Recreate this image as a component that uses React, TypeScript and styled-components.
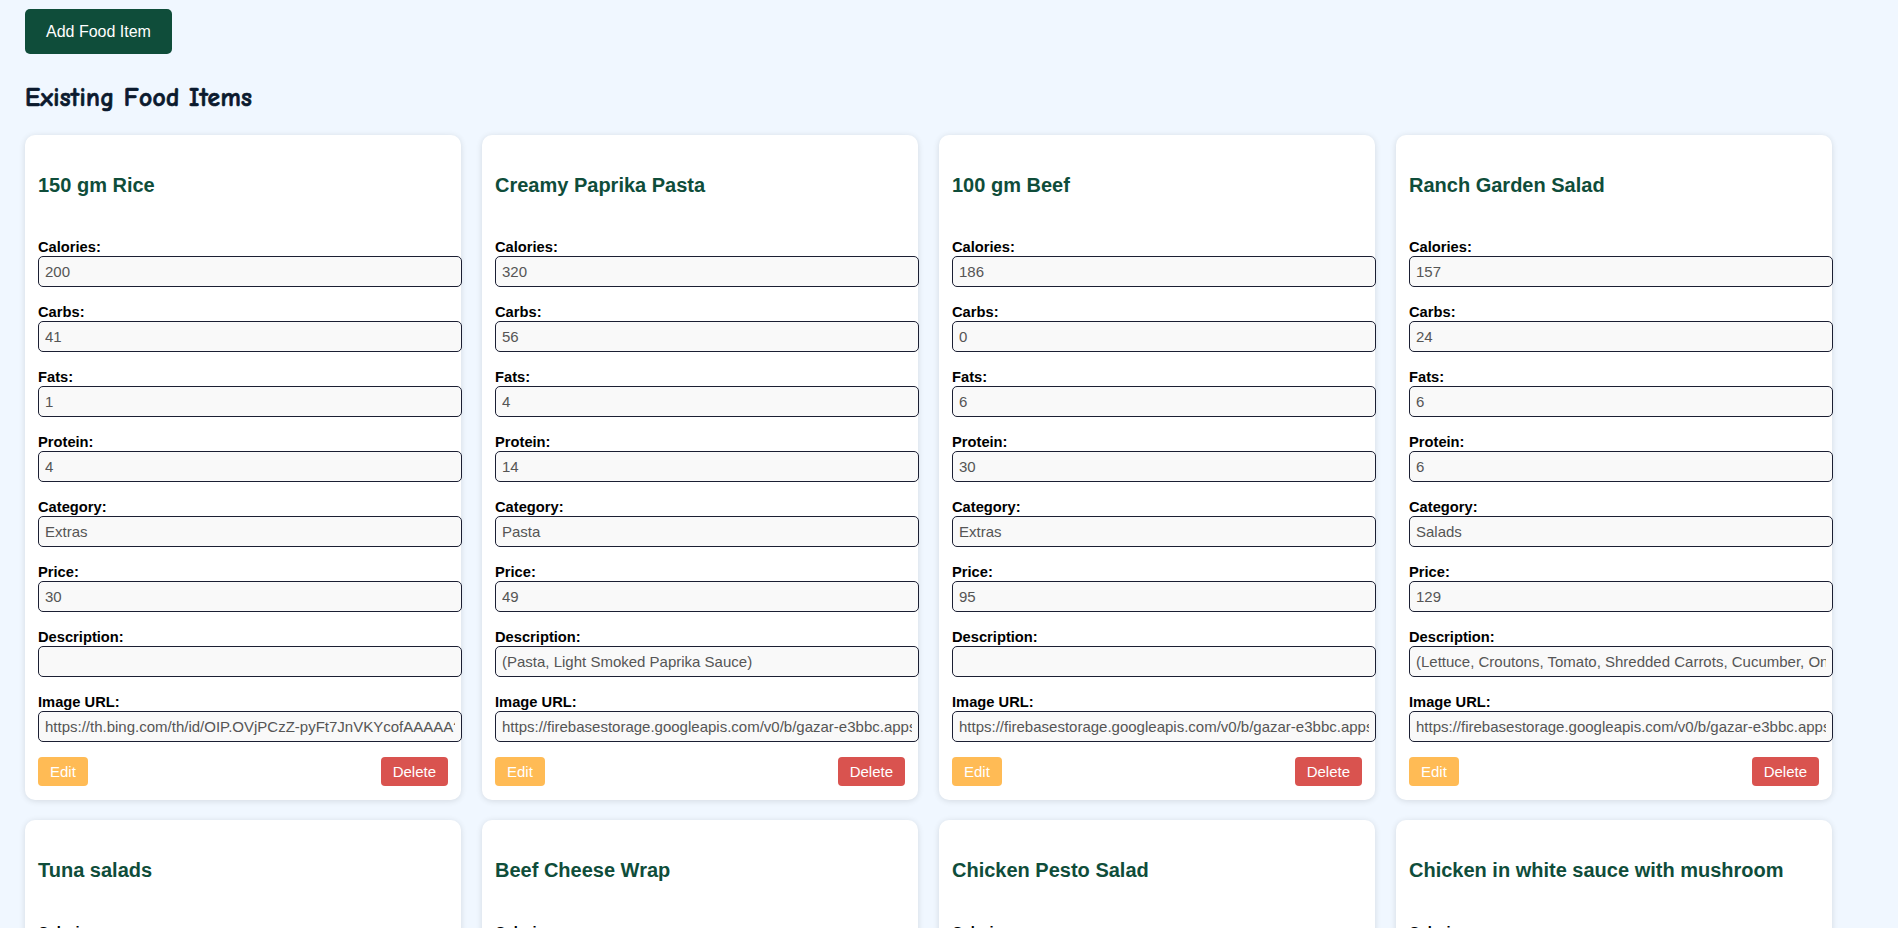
import React from "react";
import styled, { createGlobalStyle } from "styled-components";

const GlobalStyle = createGlobalStyle`
  html, body {
    margin: 0;
    padding: 0;
    background: #f0f7ff;
    font-family: "Liberation Sans", Arial, sans-serif;
  }
  * { box-sizing: content-box; }
`;

const Page = styled.main`
  padding: 9px 25px 40px;
  background: #f0f7ff;
  min-height: 100vh;
  box-sizing: border-box;
`;

const AddButton = styled.button`
  display: block;
  background: #0f4d3a;
  color: #ffffff;
  border: none;
  border-radius: 5px;
  font-family: "Liberation Sans", Arial, sans-serif;
  font-size: 16px;
  line-height: 18px;
  padding: 13.5px 21px;
  cursor: pointer;
`;

const Heading = styled.h2`
  font-family: "Comic Sans MS", "Comic Neue", cursive;
  font-size: 25.5px;
  font-weight: 700;
  line-height: 28px;
  color: #0b1a2e;
  -webkit-text-stroke: 0.7px #0b1a2e;
  letter-spacing: 0.3px;
  margin: 30px 0 23px;
`;

const Grid = styled.div`
  display: grid;
  grid-template-columns: repeat(4, 436px);
  column-gap: 21px;
  row-gap: 20px;
`;

const Card = styled.div`
  background: #ffffff;
  border-radius: 10px;
  box-shadow: 0 1px 6px rgba(0, 0, 0, 0.12);
  padding: 13px 13px 14px;
  width: 410px;
`;

const Title = styled.h3`
  font-family: "Liberation Sans", Arial, sans-serif;
  font-size: 20px;
  font-weight: 700;
  line-height: 23px;
  color: #0f4d3a;
  margin: 26px 0 42px;
`;

const Field = styled.div`
  margin-bottom: 17px;
  &:nth-last-child(2) {
    margin-bottom: 15px;
  }
`;

const Label = styled.label`
  display: block;
  font-size: 14.7px;
  font-weight: 700;
  line-height: 17px;
  color: #000000;
`;

const Input = styled.input`
  display: block;
  width: 100%;
  border: 1px solid #1b1f33;
  border-radius: 5px;
  background: #f9f9f9;
  padding: 6px;
  font-family: "Liberation Sans", Arial, sans-serif;
  font-size: 15px;
  line-height: 17px;
  color: #555555;
  outline: none;
`;

const Actions = styled.div`
  display: flex;
  justify-content: space-between;
  align-items: center;
`;

const ActionButton = styled.button<{ $tone: "edit" | "delete" }>`
  background: ${(p) => (p.$tone === "edit" ? "#ffbb55" : "#d9534f")};
  color: #ffffff;
  border: none;
  border-radius: 4px;
  font-family: "Liberation Sans", Arial, sans-serif;
  font-size: 15px;
  line-height: 17px;
  padding: 6px 12px;
  cursor: pointer;
`;

type Food = {
  name: string;
  calories: string;
  carbs: string;
  fats: string;
  protein: string;
  category: string;
  price: string;
  description: string;
  image: string;
};

const fb =
  "https://firebasestorage.googleapis.com/v0/b/gazar-e3bbc.appspot.com/o/images%2Ffood.jpg?alt=media";

const foods: Food[] = [
  {
    name: "150 gm Rice",
    calories: "200",
    carbs: "41",
    fats: "1",
    protein: "4",
    category: "Extras",
    price: "30",
    description: "",
    image: "https://th.bing.com/th/id/OIP.OVjPCzZ-pyFt7JnVKYcofAAAAA?rs=1&pid=ImgDetMain",
  },
  {
    name: "Creamy Paprika Pasta",
    calories: "320",
    carbs: "56",
    fats: "4",
    protein: "14",
    category: "Pasta",
    price: "49",
    description: "(Pasta, Light Smoked Paprika Sauce)",
    image: fb,
  },
  {
    name: "100 gm Beef",
    calories: "186",
    carbs: "0",
    fats: "6",
    protein: "30",
    category: "Extras",
    price: "95",
    description: "",
    image: fb,
  },
  {
    name: "Ranch Garden Salad",
    calories: "157",
    carbs: "24",
    fats: "6",
    protein: "6",
    category: "Salads",
    price: "129",
    description: "(Lettuce, Croutons, Tomato, Shredded Carrots, Cucumber, Onion, Ranch Sauce)",
    image: fb,
  },
  {
    name: "Tuna salads",
    calories: "210",
    carbs: "12",
    fats: "8",
    protein: "22",
    category: "Salads",
    price: "139",
    description: "",
    image: fb,
  },
  {
    name: "Beef Cheese Wrap",
    calories: "450",
    carbs: "38",
    fats: "18",
    protein: "32",
    category: "Wraps",
    price: "149",
    description: "",
    image: fb,
  },
  {
    name: "Chicken Pesto Salad",
    calories: "290",
    carbs: "14",
    fats: "12",
    protein: "28",
    category: "Salads",
    price: "139",
    description: "",
    image: fb,
  },
  {
    name: "Chicken in white sauce with mushroom",
    calories: "380",
    carbs: "20",
    fats: "15",
    protein: "35",
    category: "Main Dishes",
    price: "159",
    description: "",
    image: fb,
  },
];

const fieldList: { key: keyof Food; label: string }[] = [
  { key: "calories", label: "Calories:" },
  { key: "carbs", label: "Carbs:" },
  { key: "fats", label: "Fats:" },
  { key: "protein", label: "Protein:" },
  { key: "category", label: "Category:" },
  { key: "price", label: "Price:" },
  { key: "description", label: "Description:" },
  { key: "image", label: "Image URL:" },
];

export default function App() {
  return (
    <>
      <GlobalStyle />
      <Page>
        <AddButton>Add Food Item</AddButton>
        <Heading>Existing Food Items</Heading>
        <Grid>
          {foods.map((f) => (
            <Card key={f.name}>
              <Title>{f.name}</Title>
              {fieldList.map((fl) => (
                <Field key={fl.key}>
                  <Label>{fl.label}</Label>
                  <Input readOnly value={f[fl.key]} />
                </Field>
              ))}
              <Actions>
                <ActionButton $tone="edit">Edit</ActionButton>
                <ActionButton $tone="delete">Delete</ActionButton>
              </Actions>
            </Card>
          ))}
        </Grid>
      </Page>
    </>
  );
}
